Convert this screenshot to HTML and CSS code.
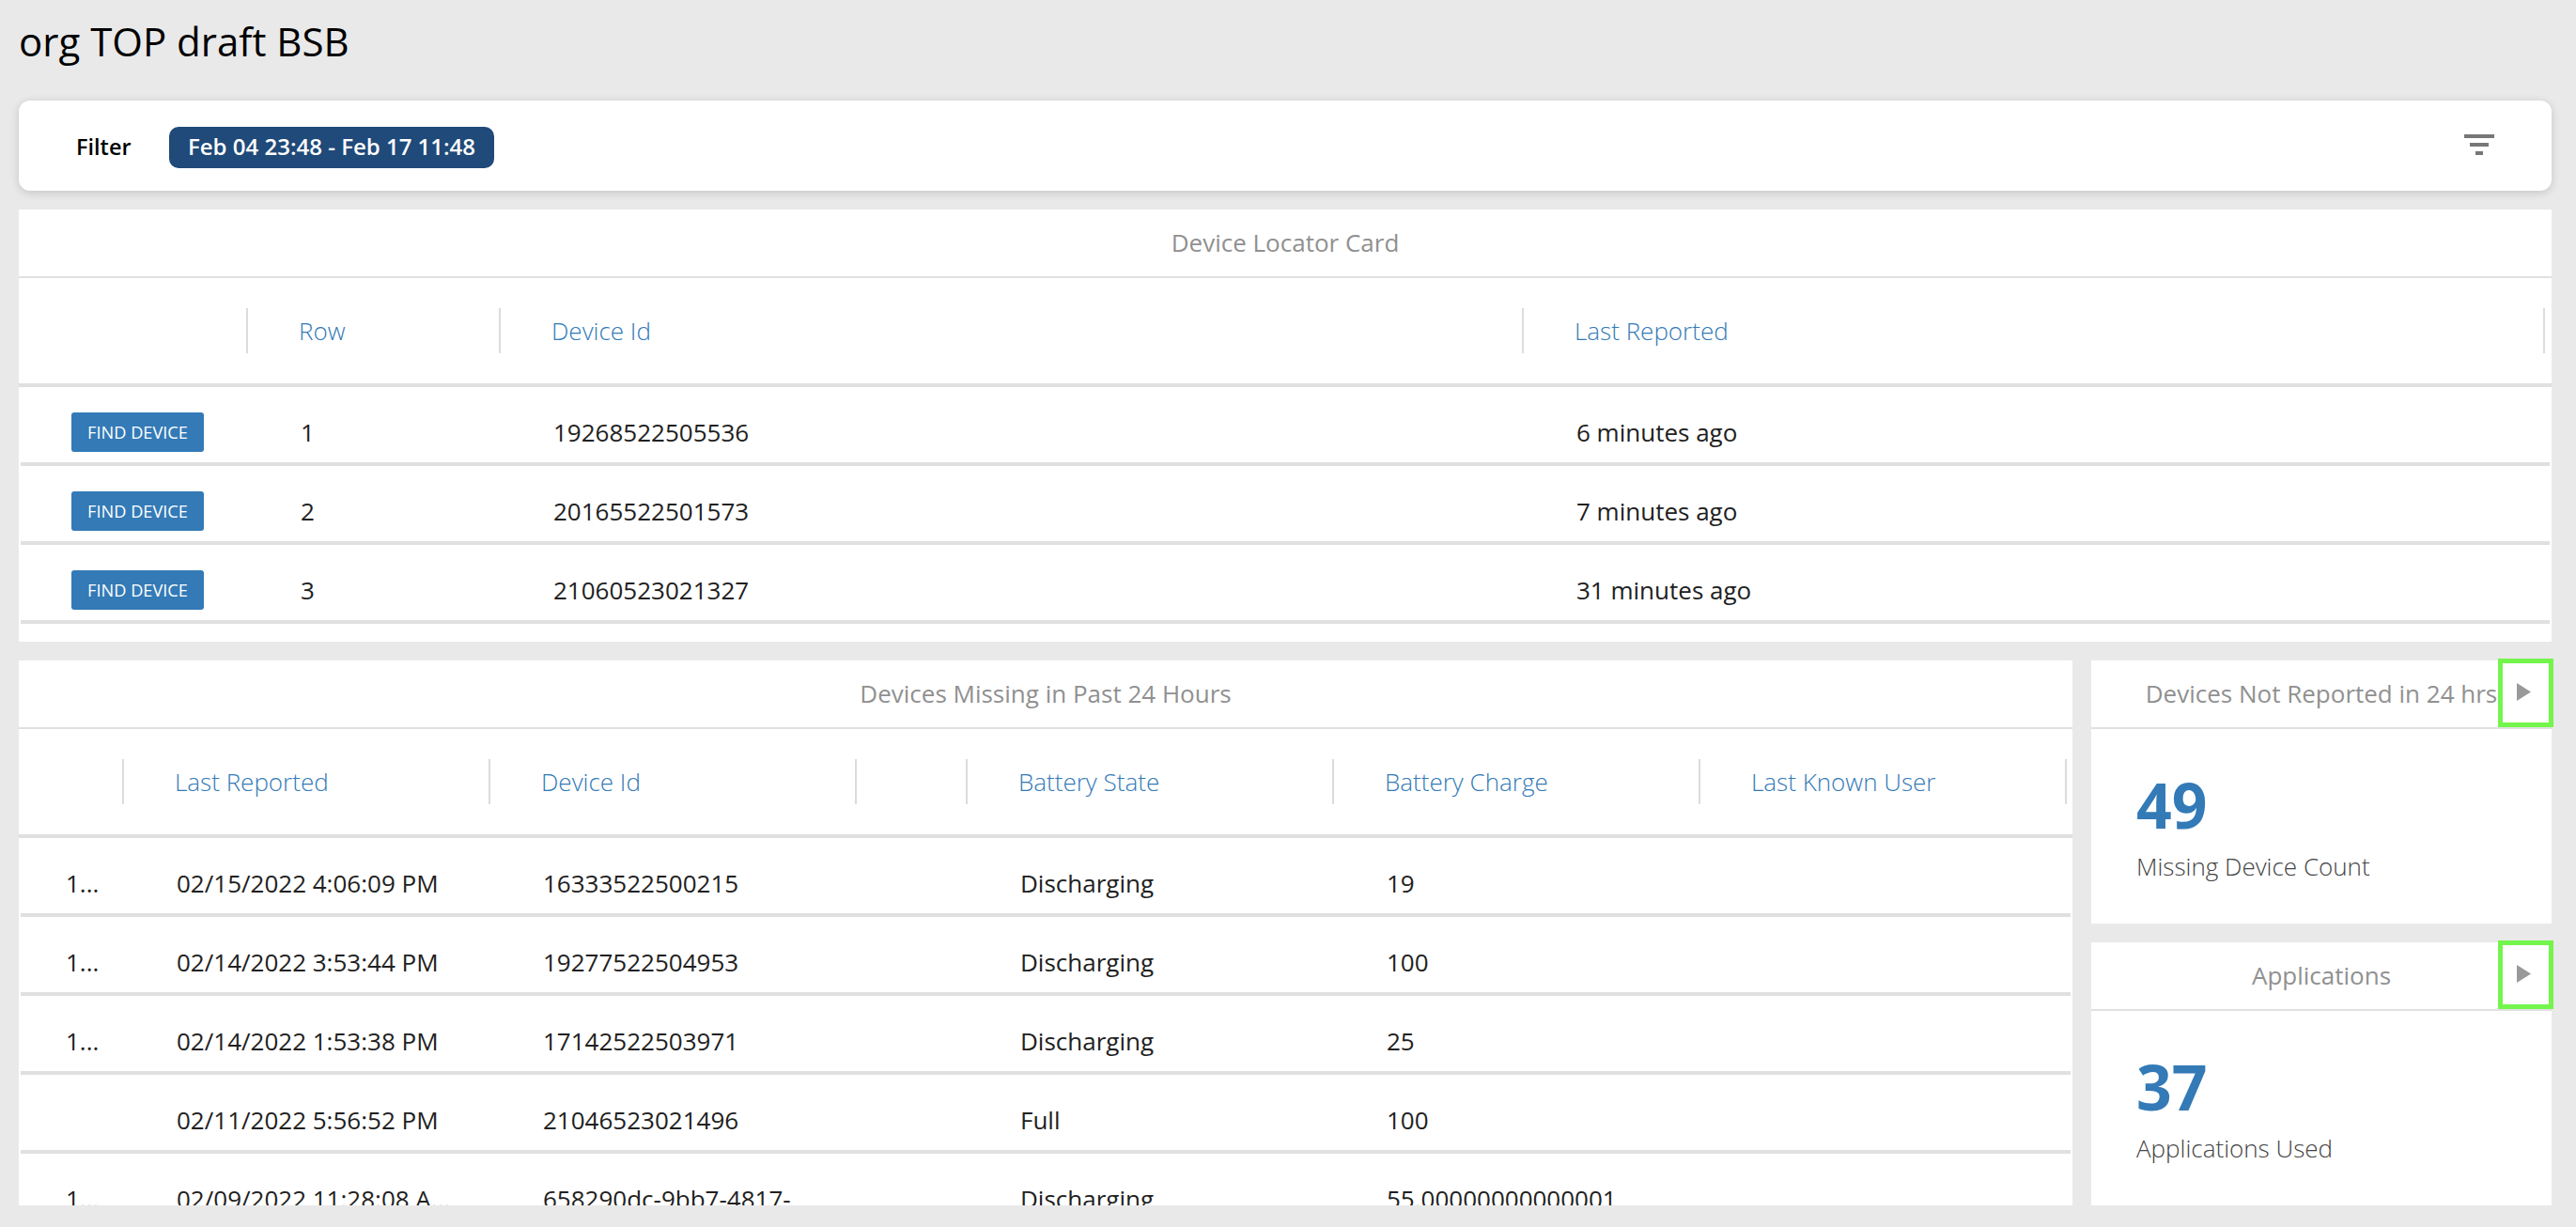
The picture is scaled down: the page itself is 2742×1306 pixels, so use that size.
FILE: index.html
```html
<!DOCTYPE html>
<html lang="en">
<head>
<meta charset="utf-8">
<title>org TOP draft BSB</title>
<link rel="stylesheet" href="styles.css">
</head>
<body>
<div class="page">
  <h1 class="page-title">org TOP draft BSB</h1>

  <section class="filter-bar">
    <span class="filter-label">Filter</span>
    <span class="filter-pill">Feb 04 23:48 - Feb 17 11:48</span>
    <svg class="filter-icon" viewBox="0 0 32 22" aria-hidden="true">
      <rect x="0" y="0" width="32" height="4"></rect>
      <rect x="6" y="9" width="20" height="4"></rect>
      <rect x="12" y="18" width="8" height="4"></rect>
    </svg>
  </section>

  <section class="card locator">
    <div class="card-head">Device Locator Card</div>
    <div class="table-head locator-cols">
      <div class="th"></div>
      <div class="th">Row</div>
      <div class="th">Device Id</div>
      <div class="th">Last Reported</div>
    </div>
    <div class="table-body">
      <div class="tr locator-cols-body">
        <div class="td td-action"><button class="find-btn">FIND DEVICE</button></div>
        <div class="td">1</div><div class="td">19268522505536</div><div class="td">6 minutes ago</div>
      </div>
      <div class="tr locator-cols-body">
        <div class="td td-action"><button class="find-btn">FIND DEVICE</button></div>
        <div class="td">2</div><div class="td">20165522501573</div><div class="td">7 minutes ago</div>
      </div>
      <div class="tr locator-cols-body">
        <div class="td td-action"><button class="find-btn">FIND DEVICE</button></div>
        <div class="td">3</div><div class="td">21060523021327</div><div class="td">31 minutes ago</div>
      </div>
    </div>
  </section>

  <div class="lower">
    <section class="card missing">
      <div class="card-head">Devices Missing in Past 24 Hours</div>
      <div class="table-head missing-cols">
        <div class="th"></div>
        <div class="th">Last Reported</div>
        <div class="th">Device Id</div>
        <div class="th"></div>
        <div class="th">Battery State</div>
        <div class="th">Battery Charge</div>
        <div class="th">Last Known User</div>
      </div>
      <div class="table-body">
        <div class="tr missing-cols-body">
          <div class="td td-index">1...</div><div class="td">02/15/2022 4:06:09 PM</div><div class="td">16333522500215</div><div class="td"></div><div class="td">Discharging</div><div class="td">19</div><div class="td"></div>
        </div>
        <div class="tr missing-cols-body">
          <div class="td td-index">1...</div><div class="td">02/14/2022 3:53:44 PM</div><div class="td">19277522504953</div><div class="td"></div><div class="td">Discharging</div><div class="td">100</div><div class="td"></div>
        </div>
        <div class="tr missing-cols-body">
          <div class="td td-index">1...</div><div class="td">02/14/2022 1:53:38 PM</div><div class="td">17142522503971</div><div class="td"></div><div class="td">Discharging</div><div class="td">25</div><div class="td"></div>
        </div>
        <div class="tr missing-cols-body">
          <div class="td td-index"></div><div class="td">02/11/2022 5:56:52 PM</div><div class="td">21046523021496</div><div class="td"></div><div class="td">Full</div><div class="td">100</div><div class="td"></div>
        </div>
        <div class="tr missing-cols-body">
          <div class="td td-index">1...</div><div class="td">02/09/2022 11:28:08 A...</div><div class="td">658290dc-9bb7-4817-</div><div class="td"></div><div class="td">Discharging</div><div class="td">55.00000000000001</div><div class="td"></div>
        </div>
      </div>
    </section>

    <div class="stats">
      <section class="card stat">
        <div class="card-head">Devices Not Reported in 24 hrs
          <span class="drill"><svg viewBox="0 0 15 19" aria-hidden="true"><polygon points="0,0 15,9.5 0,19"></polygon></svg></span>
        </div>
        <div class="stat-body">
          <div class="stat-value">49</div>
          <div class="stat-label">Missing Device Count</div>
        </div>
      </section>
      <section class="card stat">
        <div class="card-head">Applications
          <span class="drill"><svg viewBox="0 0 15 19" aria-hidden="true"><polygon points="0,0 15,9.5 0,19"></polygon></svg></span>
        </div>
        <div class="stat-body">
          <div class="stat-value">37</div>
          <div class="stat-label">Applications Used</div>
        </div>
      </section>
    </div>
  </div>
</div>
</body>
</html>
```

FILE: styles.css
```css
* { box-sizing: border-box; }
html, body { margin: 0; height: 100%; }
body {
  background: #e9e9e9;
  font-family: "Open Sans", "Liberation Sans", sans-serif;
  color: #212121;
  overflow: hidden;
}
.page {
  height: 1306px;
  padding: 0 26px 23px 20px;
  display: flex;
  flex-direction: column;
}
.page-title {
  margin: 0;
  height: 107px;
  padding-top: 16px;
  font-size: 42px;
  line-height: 56px;
  font-weight: 400;
  color: #000;
}
.filter-bar {
  height: 96px;
  flex: none;
  background: #fff;
  border-radius: 12px;
  box-shadow: 0 2px 10px rgba(0, 0, 0, 0.16);
  display: flex;
  align-items: center;
  padding: 4px 61px 0 61px;
}
.filter-label {
  font-size: 23.5px;
  font-weight: 600;
  color: #000;
  width: 99px;
  margin-top: -2px;
}
.filter-pill {
  height: 44px;
  line-height: 42px;
  padding: 0 20px;
  background: #1f4a79;
  border-radius: 10px;
  color: #fff;
  font-size: 24px;
  font-weight: 600;
}
.filter-icon {
  width: 32px;
  height: 22px;
  margin-left: auto;
  margin-top: -6px;
  fill: #777;
}
.card { background: #fff; }
.locator { height: 460px; margin-top: 20px; flex: none; display: flex; flex-direction: column; }
.card-head {
  height: 73px;
  flex: none;
  border-bottom: 2px solid #e0e0e0;
  text-align: center;
  font-size: 26px;
  line-height: 71px;
  color: #909090;
  position: relative;
}
.table-head {
  height: 116px;
  flex: none;
  border-bottom: 4px solid #e0e0e0;
  display: grid;
  align-items: center;
}
.th {
  height: 48px;
  line-height: 48px;
  padding-left: 54px;
  border-right: 2px solid #dcdcdc;
  font-size: 26px;
  font-weight: 300;
  color: #337ab7;
  white-space: nowrap;
}
.table-body {
  flex: 1;
  min-height: 0;
  margin: 0 2px;
  overflow: hidden;
}
.tr {
  height: 84px;
  padding-top: 16px;
  border-bottom: 4px solid #e0e0e0;
  display: grid;
  align-items: center;
}
.td {
  padding-left: 56px;
  font-size: 26px;
  line-height: 36px;
  white-space: nowrap;
  overflow: hidden;
}
.locator-cols { grid-template-columns: 244px 269px 1089px 1087px; }
.locator-cols-body { grid-template-columns: 242px 269px 1089px 1fr; }
.td-action { padding-left: 54px; overflow: visible; }
.find-btn {
  width: 141px;
  height: 42px;
  display: block;
  padding: 0;
  border: 0;
  border-radius: 3px;
  background: #337ab7;
  color: #fff;
  font-family: inherit;
  font-size: 18.2px;
  font-weight: 500;
}
.lower { flex: 1; min-height: 0; margin-top: 20px; display: flex; gap: 20px; }
.missing { width: 2186px; flex: none; display: flex; flex-direction: column; }
.missing-cols { grid-template-columns: 112px 390px 390px 118px 390px 390px 390px; }
.missing-cols-body { grid-template-columns: 110px 390px 390px 118px 390px 390px 1fr; }
.td-index { padding-left: 48px; }
.stats { flex: 1; display: flex; flex-direction: column; gap: 20px; }
.stat { flex: 1; }
.drill {
  position: absolute;
  right: -2px;
  top: -2px;
  width: 59px;
  height: 73px;
  border: 5px solid #74f54c;
  display: flex;
  padding: 21px 0 0 15px;
}
.drill svg { width: 15px; height: 19px; fill: #999; }
.stat-body { padding: 33px 0 0 48px; }
.stat-value {
  font-size: 66px;
  line-height: 95px;
  font-weight: 700;
  color: #337ab7;
}
.stat-label {
  font-size: 26px;
  line-height: 36px;
  font-weight: 300;
  color: #444;
}
```
